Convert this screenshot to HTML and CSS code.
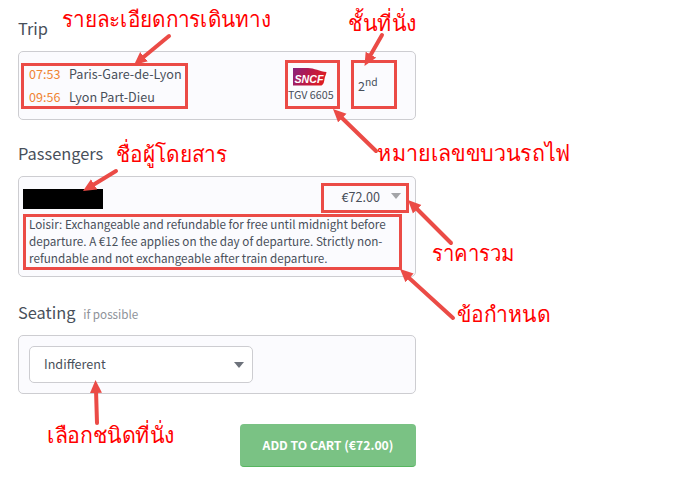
FILE: index.html
```html
<!DOCTYPE html>
<html lang="en">
<head>
    <meta charset="UTF-8">
    <meta name="viewport" content="width=device-width, initial-scale=1.0">
    <title>Trip</title>
    <link rel="stylesheet" href="styles.css">
</head>
<body>
    <main class="booking">
        <!-- Trip -->
        <h2>Trip</h2>
        <section class="card trip">
            <div class="stops">
                <span class="time">07:53</span><span>Paris-Gare-de-Lyon</span>
                <span class="time">09:56</span><span>Lyon Part-Dieu</span>
            </div>
            <div class="train">
                <svg class="logo" width="35" height="19" viewBox="0 0 35 19">
                    <defs>
                        <linearGradient id="carmillon" x1="0" y1="0" x2="1" y2="0.3">
                            <stop offset="0" stop-color="#87227f"/>
                            <stop offset="0.5" stop-color="#b51a4c"/>
                            <stop offset="1" stop-color="#dc1d24"/>
                        </linearGradient>
                    </defs>
                    <path d="M0 1H15C21 1 27 4.500 33.500 5C33 8 32 9 31.500 12C31 15 31 17 28.500 18.500H0Z" fill="url(#carmillon)"/>
                    <text x="1.5" y="15.500" textLength="29" lengthAdjust="spacingAndGlyphs">SNCF</text>
                </svg>
                <span>TGV 6605</span>
            </div>
            <div class="class-type">2<sup>nd</sup></div>
        </section>

        <!-- Passengers -->
        <h2>Passengers</h2>
        <section class="card passengers">
            <div class="passenger">
                <span class="name"></span>
                <span class="price">€72.00</span>
                <span class="caret light"></span>
            </div>
            <p>Loisir: Exchangeable and refundable for free until midnight before<br>departure. A €12 fee applies on the day of departure. Strictly non-<br>refundable and not exchangeable after train departure.</p>
        </section>

        <!-- Seating -->
        <h2>Seating <small>if possible</small></h2>
        <section class="card seating">
            <div class="select">Indifferent<span class="caret"></span></div>
        </section>

        <button class="cart">ADD TO CART (€72.00)</button>
    </main>

    <!-- Notes drawn over the form -->
    <svg class="notes" width="688" height="485" viewBox="0 0 688 485">
        <defs>
            <marker id="head" markerUnits="userSpaceOnUse" markerWidth="14" markerHeight="14" refX="13" refY="6.5" orient="auto">
                <path d="M0 0.5L13 6.5L0 12.5Z" fill="#eb4b46"/>
            </marker>
        </defs>
        <g class="boxes">
            <rect x="22.5" y="64.5" width="164" height="43"/>
            <rect x="286.5" y="61.5" width="52" height="46"/>
            <rect x="352.5" y="61.5" width="43" height="46"/>
            <rect x="322.5" y="184.5" width="85" height="27"/>
            <rect x="24.5" y="215.5" width="376" height="53"/>
        </g>
        <g class="arrows">
            <path d="M169 36L143 57.500"/><path class="tip" d="M169 36L134 65"/>
            <path d="M382 35L370 56"/><path class="tip" d="M382 35L364.500 66"/>
            <path d="M376 151L341 117"/><path class="tip" d="M376 151L333 109"/>
            <path d="M116 171L93 185"/><path class="tip" d="M116 171L83 191"/>
            <path d="M451 243L416 208"/><path class="tip" d="M451 243L408 200"/>
            <path d="M453 318L408 277"/><path class="tip" d="M453 318L400 269"/>
            <path d="M97 423L96 390"/><path class="tip" d="M97 423L95.500 380"/>
        </g>
        <g class="labels" lang="th">
            <text x="62" y="27" textLength="209" lengthAdjust="spacingAndGlyphs">รายละเอียดการเดินทาง</text>
            <text x="348" y="31" textLength="69" lengthAdjust="spacingAndGlyphs">ชั้นที่นั่ง</text>
            <text x="116" y="162" textLength="111" lengthAdjust="spacingAndGlyphs">ชื่อผู้โดยสาร</text>
            <text x="377" y="161" textLength="194" lengthAdjust="spacingAndGlyphs">หมายเลขขบวนรถไฟ</text>
            <text x="432" y="261" textLength="83" lengthAdjust="spacingAndGlyphs">ราคารวม</text>
            <text x="457" y="322" textLength="93" lengthAdjust="spacingAndGlyphs">ข้อกำหนด</text>
            <text x="47" y="443" textLength="128" lengthAdjust="spacingAndGlyphs">เลือกชนิดที่นั่ง</text>
        </g>
    </svg>
</body>
</html>
```

FILE: styles.css
```css
* {
    margin: 0;
    padding: 0;
    box-sizing: border-box;
}

body {
    position: relative;
    height: 485px;
    overflow: hidden;
    background: #fff;
    color: #484f5a;
    font-family: "Noto Sans CJK SC", "Open Sans", sans-serif;
    font-size: 12.6px;
}

.booking {
    display: flex;
    flex-direction: column;
    width: 398px;
    margin-left: 18px;
    padding-top: 16px;
}

h2 {
    height: 24px;
    margin-bottom: 11px;
    font-size: 16.4px;
    font-weight: 400;
    line-height: 24px;
}

h2 small {
    margin-left: 4px;
    color: #8e9299;
    font-size: 11.7px;
}

.card {
    margin-bottom: 23px;
    border: 1px solid #cdcdd1;
    border-radius: 5px;
    background: #fbfbfe;
}

/* Trip */
.trip {
    display: flex;
    height: 69px;
    margin-bottom: 21px;
    padding: 11px 10px;
}

.stops {
    display: grid;
    grid-template-columns: 40px auto;
    width: 259px;
    align-content: start;
    justify-content: start;
    line-height: 22.5px;
}

.time {
    color: #f08433;
}

.train {
    display: flex;
    flex-direction: column;
    width: 70px;
    padding-top: 4px;
    font-size: 10.7px;
    line-height: 18px;
}

.logo {
    flex: none;
    margin-left: 5px;
}

.logo text {
    fill: #fff;
    font: italic bold 11.5px "Liberation Sans", sans-serif;
}

.class-type {
    padding-top: 13px;
    line-height: 20px;
}

.class-type sup {
    font-size: 10.3px;
    line-height: 0;
}

/* Passengers */
.passengers {
    height: 101px;
}

.passenger {
    display: flex;
    align-items: center;
    height: 38px;
    padding: 0 14px 0 4px;
}

.name {
    width: 80px;
    height: 20px;
    margin-top: 6px;
    background: #000;
}

.price {
    margin-left: auto;
    margin-right: 11px;
}

.passengers p {
    padding-left: 10px;
    font-size: 11.7px;
    line-height: 17px;
    white-space: nowrap;
}

.caret {
    border: 5px solid transparent;
    border-top: 6px solid #6d727b;
    border-bottom: 0;
}

.caret.light {
    border-top-color: #a3a4a8;
}

/* Seating */
.seating {
    height: 59px;
    padding: 10px;
}

.select {
    display: flex;
    align-items: center;
    justify-content: space-between;
    width: 224px;
    height: 37px;
    padding: 0 8px 2px 14px;
    border: 1px solid #cdcdd1;
    border-radius: 5px;
    background: #fff;
}

.select .caret {
    margin-top: 3px;
}

.cart {
    align-self: flex-end;
    width: 176px;
    height: 43px;
    margin-top: 7px;
    border: 0;
    border-bottom: 1px solid #57b560;
    border-radius: 4px;
    background: #7ac284;
    color: #fff;
    font-family: inherit;
    font-size: 12.2px;
    font-weight: 700;
}

/* Notes */
.notes {
    position: absolute;
    top: 0;
    left: 0;
}

.boxes rect {
    fill: none;
    stroke: #eb4b46;
    stroke-width: 3;
}

.arrows path {
    stroke: #eb4b46;
    stroke-width: 4;
    stroke-linecap: round;
}

.arrows .tip {
    stroke-width: 0;
    marker-end: url(#head);
}

.labels text {
    fill: #ff0000;
    font-family: "Liberation Serif", serif;
    font-size: 22px;
}
```
